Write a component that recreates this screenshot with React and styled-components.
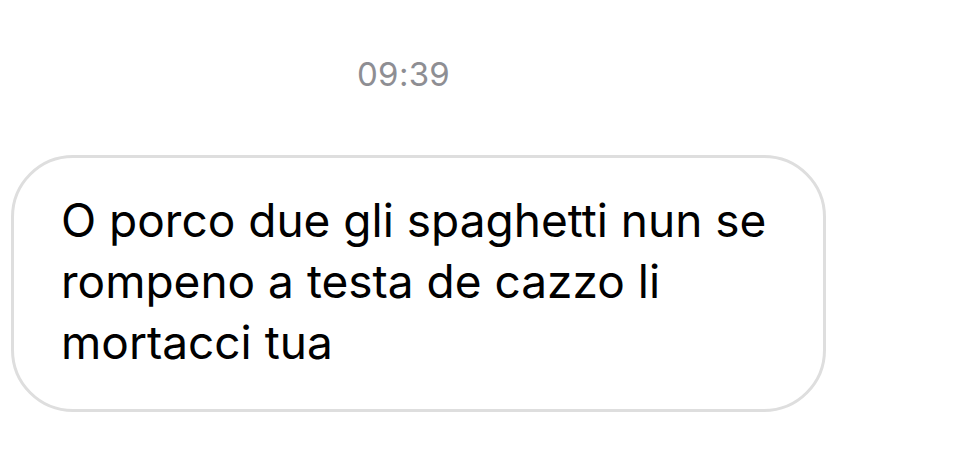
import React from "react";
import styled, { createGlobalStyle } from "styled-components";

const Global = createGlobalStyle`
  html, body { margin: 0; padding: 0; background: #ffffff; }
  body { font-family: Inter, "Liberation Sans", Arial, sans-serif; -webkit-font-smoothing: antialiased; }
`;

const Thread = styled.main`
  width: 968px;
  height: 461px;
  box-sizing: border-box;
  padding: 52px 0 0 11px;
  display: flex;
  flex-direction: column;
  align-items: flex-start;
  overflow: hidden;
`;

const Timestamp = styled.div`
  margin-left: 346px;
  font-size: 33px;
  line-height: 44px;
  color: #8e8e93;
  letter-spacing: 0.3px;
`;

const Bubble = styled.div`
  margin-top: 59px;
  width: 815px;
  box-sizing: border-box;
  border: 3px solid #dedede;
  border-radius: 62px;
  padding: 32px 30px 36px 47px;
  font-size: 46px;
  line-height: 61px;
  color: #000000;
`;

export default function App() {
  return (
    <>
      <Global />
      <Thread>
        <Timestamp>09:39</Timestamp>
        <Bubble>
          O porco due gli spaghetti nun se rompeno a testa de cazzo li mortacci tua
        </Bubble>
      </Thread>
    </>
  );
}
